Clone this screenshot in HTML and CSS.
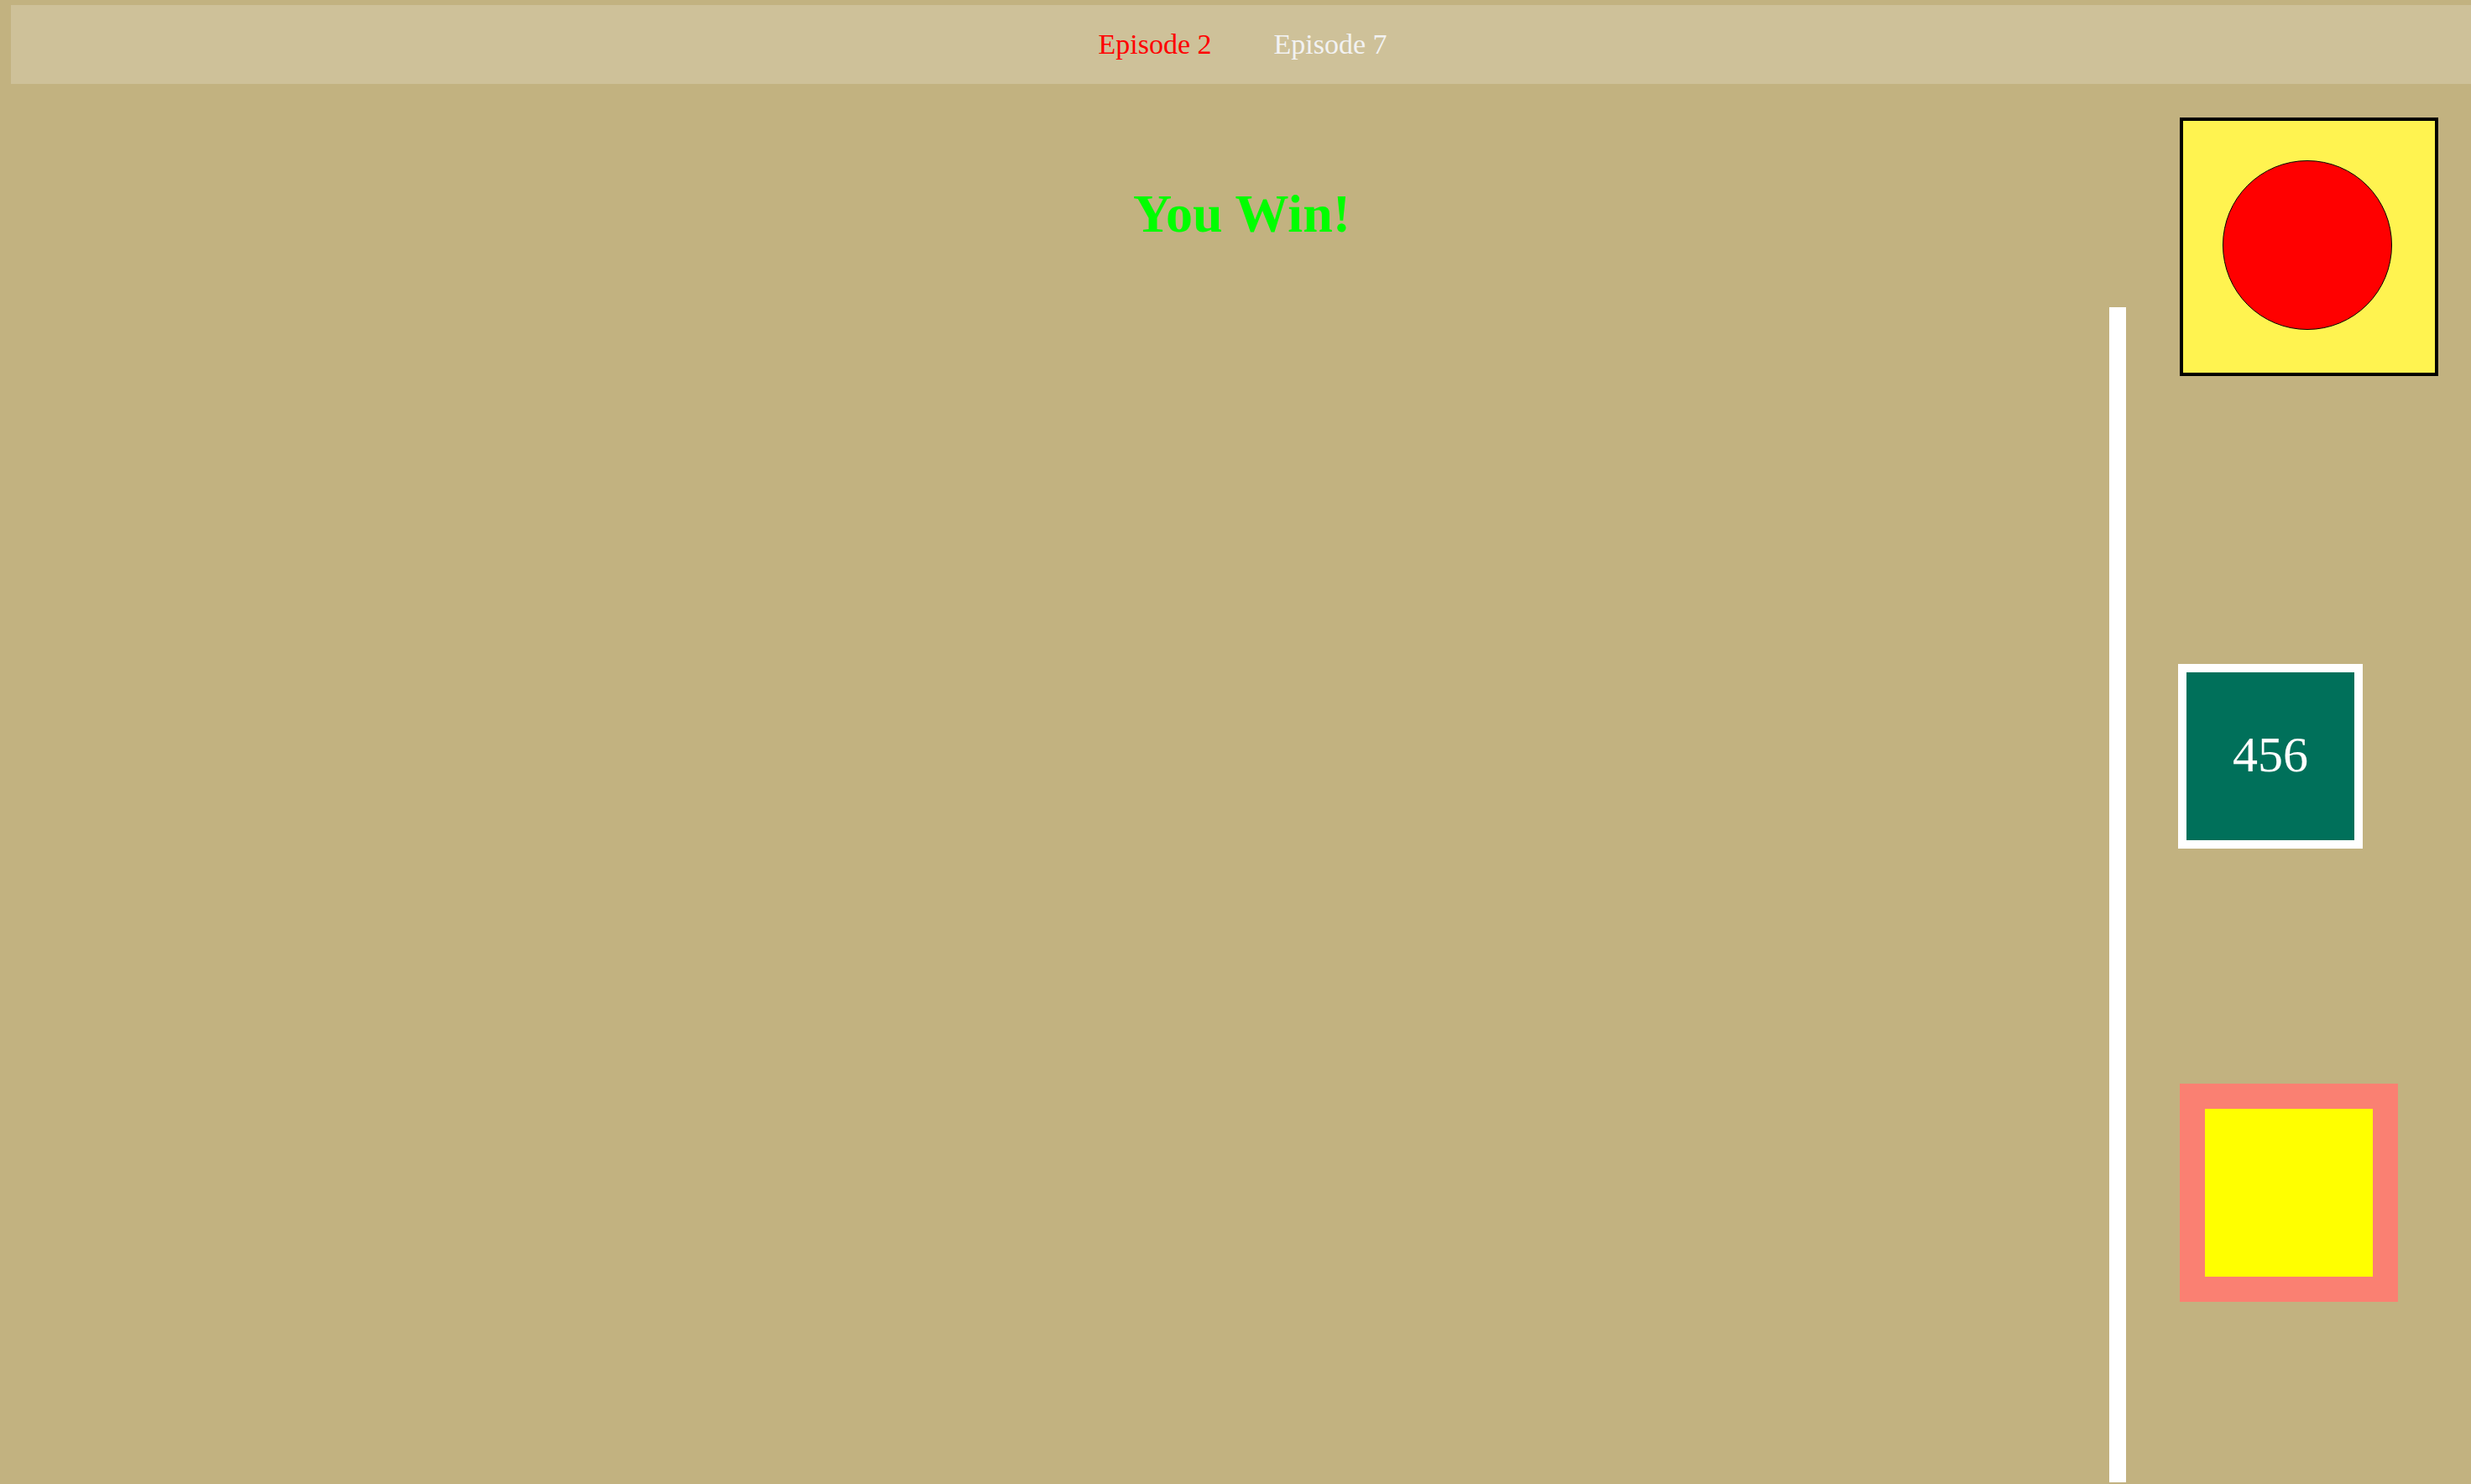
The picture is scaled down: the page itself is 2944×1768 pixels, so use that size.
FILE: index.html
```html
<!DOCTYPE html>
<html>
<head>
<meta charset="utf-8">
<link rel="stylesheet" href="styles.css">
</head>
<body>
<div class="page">
  <nav class="topbar">
    <span class="ep ep-active">Episode 2</span>
    <span class="ep">Episode 7</span>
  </nav>
  <div class="content">
    <h1 class="win">You Win!</h1>
    <div class="divider"></div>
    <aside class="sidebar">
      <div class="token">
        <div class="dot"></div>
      </div>
      <div class="score">456</div>
      <div class="framed">
        <div class="framed-inner"></div>
      </div>
    </aside>
  </div>
</div>
</body>
</html>
```

FILE: styles.css
```css
html, body {
  margin: 0;
  padding: 0;
  background: #c2b280;
  height: 100%;
  overflow: hidden;
}

.page {
  padding: 6px 0 0 13px;
  font-family: "Liberation Serif", "Times New Roman", serif;
}

.topbar {
  height: 94px;
  padding-left: 4px;
  background: rgba(255, 255, 255, 0.2);
  display: flex;
  align-items: center;
  justify-content: center;
  gap: 74px;
}

.ep {
  font-size: 34px;
  color: #f2f2f2;
}

.ep-active {
  color: #ff0000;
}

.content {
  display: grid;
  grid-template-columns: 1fr 20px 411px;
  grid-template-rows: auto 1fr;
  height: 1668px;
}

.win {
  grid-column: 1 / -1;
  grid-row: 1;
  margin: 0;
  padding-top: 118px;
  padding-left: 2px;
  text-align: center;
  font-size: 64px;
  font-weight: bold;
  color: #00ff00;
  line-height: normal;
}

.divider {
  grid-column: 2;
  grid-row: 1 / 3;
  margin-top: 266px;
  height: 1400px;
  background: #ffffff;
}

.sidebar {
  grid-column: 3;
  grid-row: 1 / 3;
  padding: 40px 0 0 64px;
  display: flex;
  flex-direction: column;
  align-items: flex-start;
}

.token {
  width: 253px;
  height: 253px;
  border: 4px solid #000;
  background: #fff350;
  padding: 47px 0 0 47px;
}

.dot {
  width: 200px;
  height: 200px;
  border: 1px solid #000;
  border-radius: 50%;
  background: #ff0000;
}

.score {
  margin-top: 343px;
  margin-left: -2px;
  width: 200px;
  height: 197px;
  padding-bottom: 3px;
  border: 10px solid #ffffff;
  background: #00705a;
  color: #ffffff;
  font-size: 60px;
  display: flex;
  align-items: center;
  justify-content: center;
}

.framed {
  margin-top: 280px;
  border: 30px solid #fa8072;
}

.framed-inner {
  width: 200px;
  height: 200px;
  background: #ffff00;
}
```
